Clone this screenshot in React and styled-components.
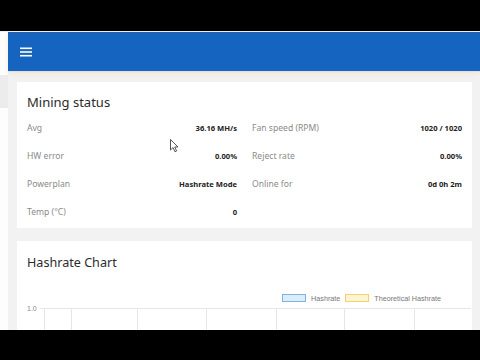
import React from 'react';
import styled, { createGlobalStyle } from 'styled-components';

const GlobalStyle = createGlobalStyle`
  html, body { margin: 0; padding: 0; background: #000; }
  body { font-family: "Noto Sans", "Open Sans", sans-serif; }
`;

const Screen = styled.div`
  position: relative;
  width: 480px;
  height: 360px;
  background: #000;
  display: flex;
  flex-direction: column;
  overflow: hidden;
`,
  Band = styled.div`
    height: ${props => props.h}px;
    flex: none;
    background: #000;
  `,
  Frame = styled.div`
    height: 298px;
    flex: none;
    display: flex;
    background: #fff;
    border-top: 1px solid #e9eef4;
    overflow: hidden;
  `,
  SideRail = styled.div`
    width: 8px;
    flex: none;
    background: #fdfdfd;
    padding-top: 43px;
  `,
  RailItem = styled.div`
    height: 33px;
    background: #ececec;
  `,
  Main = styled.div`
    flex: 1;
    display: flex;
    flex-direction: column;
    min-width: 0;
  `,
  AppBar = styled.header`
    height: 39px;
    flex: none;
    background: #1464c0;
    border-top: 1px solid #2a5fa8;
    border-bottom: 1px solid #2b61a6;
    box-sizing: border-box;
    display: flex;
    align-items: center;
    padding-left: 12px;
    box-shadow: 0 1px 0 #cfe6fb, 0 3px 4px rgba(240, 225, 200, 0.6);
    position: relative;
    z-index: 1;
  `,
  MenuButton = styled.button`
    border: 0;
    background: none;
    padding: 0;
    display: flex;
    cursor: pointer;
  `,
  Content = styled.main`
    flex: 1;
    background: #f2f2f2;
    padding: 11px 8px 0 9px;
    display: flex;
    flex-direction: column;
    gap: 13px;
  `,
  Card = styled.section`
    background: #fff;
    padding: ${props => props.pad};
    flex: none;
  `,
  CardTitle = styled.h2`
    margin: 0;
    font-size: ${props => props.size || 13}px;
    line-height: 20px;
    font-weight: 400;
    color: #2b2b2b;
  `,
  StatGrid = styled.div`
    margin-top: 2px;
    display: grid;
    grid-template-columns: 1fr 1fr;
    column-gap: 15px;
  `,
  Stat = styled.div`
    height: 28px;
    display: flex;
    align-items: center;
    justify-content: space-between;
  `,
  Label = styled.span`
    font-size: 8.6px;
    color: #8a8a8a;
  `,
  Value = styled.span`
    font-size: 7.6px;
    font-weight: 700;
    color: #222;
  `,
  Legend = styled.div`
    margin-top: 20px;
    display: flex;
    justify-content: flex-end;
    align-items: center;
    gap: 5px;
    padding-right: 21px;
    height: 10px;
  `,
  Swatch = styled.span`
    width: 22px;
    height: 6px;
    border: 1px solid ${props => props.line};
    background: ${props => props.fill};
  `,
  LegendText = styled.span`
    font-family: "Liberation Sans", Arial, sans-serif;
    font-size: 7.2px;
    color: #777;
  `,
  ChartArea = styled.div`
    position: relative;
    height: 40px;
    margin-right: -10px;
  `,
  Cursor = styled.svg`
    position: absolute;
    left: 170px;
    top: 139px;
  `;

const stats = [
  ['Avg', '36.16 MH/s'],
  ['Fan speed (RPM)', '1020 / 1020'],
  ['HW error', '0.00%'],
  ['Reject rate', '0.00%'],
  ['Powerplan', 'Hashrate Mode'],
  ['Online for', '0d 0h 2m'],
  ['Temp (°C)', '0'],
];

const gridX = [17, 44, 110, 179, 249, 317, 387];

const App = () => (
  <Screen>
    <GlobalStyle />
    <Band h={31} />
    <Frame>
      <SideRail>
        <RailItem />
      </SideRail>
      <Main>
        <AppBar>
          <MenuButton aria-label="menu">
            <svg width="12" height="10" viewBox="0 0 12 10">
              <rect x="0" y="0.5" width="12" height="1.6" fill="#fff" />
              <rect x="0" y="4.2" width="12" height="1.6" fill="#fff" />
              <rect x="0" y="7.9" width="12" height="1.6" fill="#fff" />
            </svg>
          </MenuButton>
        </AppBar>
        <Content>
          <Card pad="10px 10px 2px">
            <CardTitle>Mining status</CardTitle>
            <StatGrid>
              {stats.map(([label, value]) => (
                <Stat key={label}>
                  <Label>{label}</Label>
                  <Value>{value}</Value>
                </Stat>
              ))}
            </StatGrid>
          </Card>
          <Card pad="12px 10px 0">
            <CardTitle size={12.6}>Hashrate Chart</CardTitle>
            <Legend>
              <Swatch line="#7fb3e3" fill="#dcecf9" />
              <LegendText>Hashrate</LegendText>
              <Swatch line="#f3d36b" fill="#fdf4d3" />
              <LegendText>Theoretical Hashrate</LegendText>
            </Legend>
            <ChartArea>
              <svg width="444" height="40">
                <text x="0" y="8" fontSize="7" fill="#888" fontFamily="Liberation Sans, Arial, sans-serif">1.0</text>
                <line x1="13" y1="5.5" x2="444" y2="5.5" stroke="#e6e6e6" />
                {gridX.map(x => (
                  <line key={x} x1={x + 0.5} y1="5" x2={x + 0.5} y2="40" stroke="#e6e6e6" />
                ))}
              </svg>
            </ChartArea>
          </Card>
        </Content>
      </Main>
    </Frame>
    <Band h={31} />
    <Cursor width="10" height="14" viewBox="0 0 10 14">
      <path d="M0.5 0.5 L0.5 11 L3 8.6 L5 12.8 L6.6 12 L4.7 8 L8 8 Z" fill="#fff" stroke="#444" strokeWidth="0.9" />
    </Cursor>
  </Screen>
);

export default App;
